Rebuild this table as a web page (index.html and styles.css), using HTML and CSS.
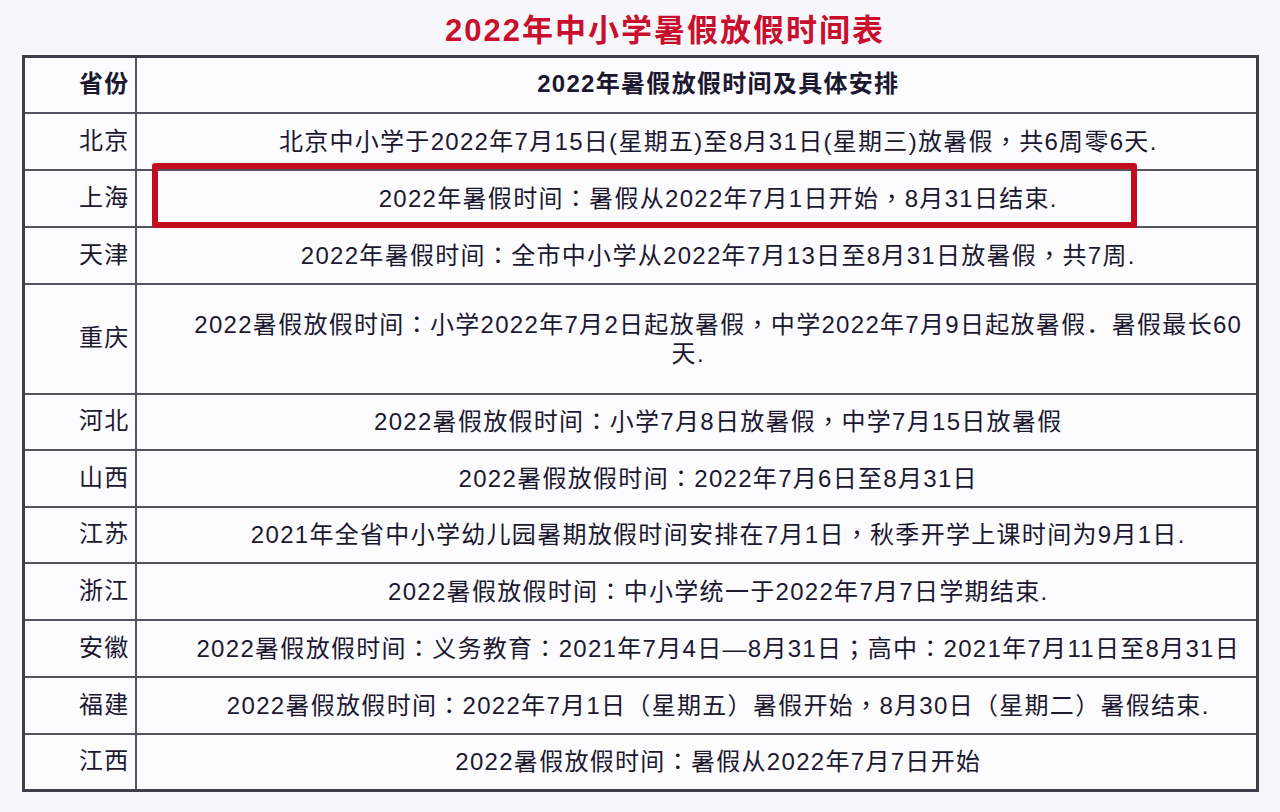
FILE: index.html
```html
<!DOCTYPE html>
<html lang="zh-CN">
<head>
<meta charset="utf-8">
<title>2022年中小学暑假放假时间表</title>
<link rel="stylesheet" href="styles.css">
</head>
<body>
<div class="page">
  <h1 class="title">2022年中小学暑假放假时间表</h1>
  <table class="sheet">
    <colgroup><col class="c-prov"><col class="c-info"></colgroup>
    <thead>
      <tr class="r-56"><th class="prov">省份</th><th class="info">2022年暑假放假时间及具体安排</th></tr>
    </thead>
    <tbody>
      <tr class="r-57"><td class="prov">北京</td><td class="info">北京中小学于2022年7月15日(星期五)至8月31日(星期三)放暑假<span class="pn" lang="zh-TW">，</span>共6周零6天.</td></tr>
      <tr class="r-57"><td class="prov">上海</td><td class="info">2022年暑假时间<span class="pn" lang="zh-TW">：</span>暑假从2022年7月1日开始<span class="pn" lang="zh-TW">，</span>8月31日结束.</td></tr>
      <tr class="r-57"><td class="prov">天津</td><td class="info">2022年暑假时间<span class="pn" lang="zh-TW">：</span>全市中小学从2022年7月13日至8月31日放暑假<span class="pn" lang="zh-TW">，</span>共7周.</td></tr>
      <tr class="r-110"><td class="prov">重庆</td><td class="info tall">2022暑假放假时间<span class="pn" lang="zh-TW">：</span>小学2022年7月2日起放暑假<span class="pn" lang="zh-TW">，</span>中学2022年7月9日起放暑假．暑假最长60<br><span class="tail">天.</span></td></tr>
      <tr class="r-56"><td class="prov">河北</td><td class="info">2022暑假放假时间<span class="pn" lang="zh-TW">：</span>小学7月8日放暑假<span class="pn" lang="zh-TW">，</span>中学7月15日放暑假</td></tr>
      <tr class="r-57"><td class="prov">山西</td><td class="info">2022暑假放假时间<span class="pn" lang="zh-TW">：</span>2022年7月6日至8月31日</td></tr>
      <tr class="r-56"><td class="prov">江苏</td><td class="info">2021年全省中小学幼儿园暑期放假时间安排在7月1日<span class="pn" lang="zh-TW">，</span>秋季开学上课时间为9月1日.</td></tr>
      <tr class="r-57"><td class="prov">浙江</td><td class="info">2022暑假放假时间<span class="pn" lang="zh-TW">：</span>中小学统一于2022年7月7日学期结束.</td></tr>
      <tr class="r-57"><td class="prov">安徽</td><td class="info">2022暑假放假时间<span class="pn" lang="zh-TW">：</span>义务教育<span class="pn" lang="zh-TW">：</span>2021年7月4日—8月31日<span class="pn" lang="zh-TW">；</span>高中<span class="pn" lang="zh-TW">：</span>2021年7月11日至8月31日</td></tr>
      <tr class="r-57"><td class="prov">福建</td><td class="info">2022暑假放假时间<span class="pn" lang="zh-TW">：</span>2022年7月1日<span class="pn" lang="zh-TW">（</span>星期五<span class="pn" lang="zh-TW">）</span>暑假开始<span class="pn" lang="zh-TW">，</span>8月30日<span class="pn" lang="zh-TW">（</span>星期二<span class="pn" lang="zh-TW">）</span>暑假结束.</td></tr>
      <tr class="r-57"><td class="prov">江西</td><td class="info">2022暑假放假时间<span class="pn" lang="zh-TW">：</span>暑假从2022年7月7日开始</td></tr>
    </tbody>
  </table>
  <div class="mark"></div>
</div>
</body>
</html>
```
FILE: styles.css
```css
html, body {
  margin: 0;
  padding: 0;
}
body {
  background: #f7f7fb;
  font-family: "Liberation Sans", "Noto Sans CJK SC", sans-serif;
  color: #1b1830;
}
.page {
  position: relative;
  width: 1280px;
  height: 812px;
  overflow: hidden;
}
.title {
  margin: 0;
  height: 55px;
  box-sizing: border-box;
  padding-left: 50px;
  display: flex;
  align-items: center;
  justify-content: center;
  font-size: 31px;
  font-weight: bold;
  letter-spacing: 2px;
  color: #c8102e;
}
.sheet {
  margin-left: 22px;
  width: 1234px;
  table-layout: fixed;
  border-collapse: collapse;
  border: 3px solid #3f3d4a;
  background: #fcfcfe;
}
.c-prov { width: 112px; }
.c-info { width: 1122px; }
.sheet th,
.sheet td {
  border: 2px solid #55535f;
  padding: 0;
  font-size: 24px;
  letter-spacing: 1.3px;
  white-space: nowrap;
  line-height: 1.2;
  vertical-align: middle;
}
.sheet th {
  font-weight: bold;
}
.pn {
  font-family: "Noto Sans CJK TC", "Noto Sans CJK SC", sans-serif;
}
.prov {
  text-align: right;
  padding-right: 5px !important;
}
.info {
  text-align: center;
  padding-left: 44px !important;
}
.tall {
  line-height: 54px;
}
.tail {
  margin-right: 60px;
}
.r-56 { height: 56px; }
.r-57 { height: 57px; }
.r-110 { height: 110px; }
.mark {
  position: absolute;
  left: 152px;
  top: 163px;
  width: 985px;
  height: 65px;
  box-sizing: border-box;
  border: 6px solid #c30d1f;
  border-radius: 3px;
}
```
